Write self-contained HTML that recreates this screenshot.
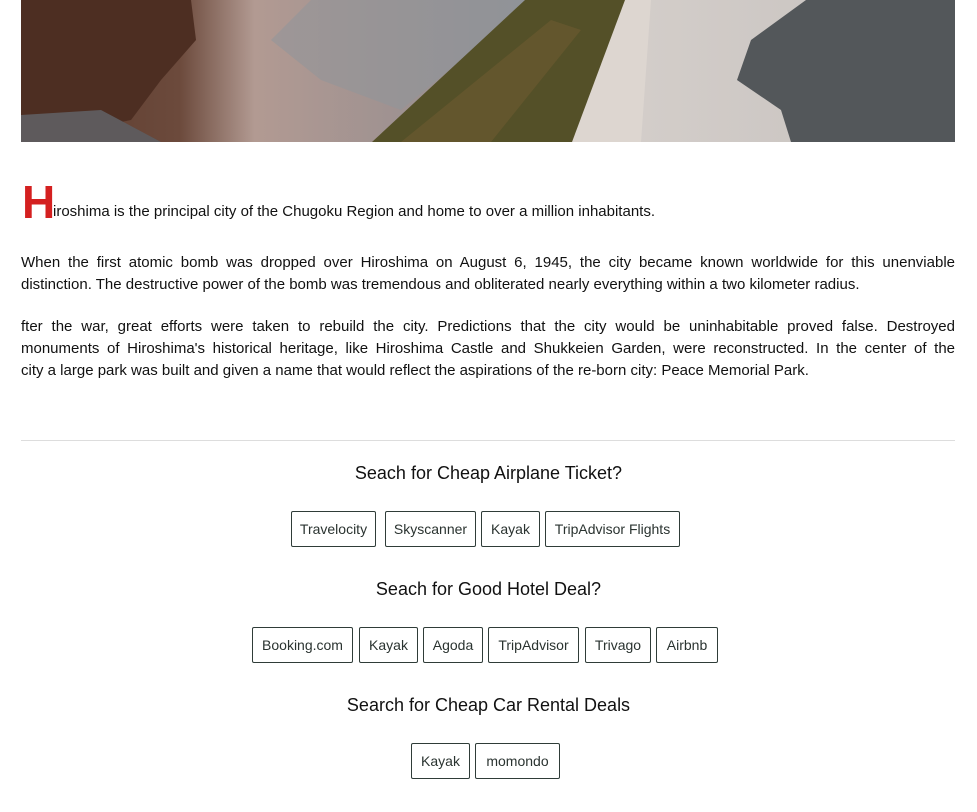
<!DOCTYPE html>
<html><head><meta charset="utf-8"><style>
html,body{margin:0;padding:0;background:#fff;}
body{width:977px;height:812px;overflow:hidden;font-family:"Liberation Sans",sans-serif;color:#111;position:relative;}
.photo{position:absolute;left:21px;top:0;width:934px;height:142px;}
.l{position:absolute;left:21px;width:934px;font-size:15px;line-height:22px;white-space:nowrap;}
.j{text-align:justify;text-align-last:justify;white-space:normal;}
.cap{position:absolute;left:22px;top:177px;color:#d42020;font-weight:bold;font-size:46px;line-height:50px;}
hr{position:absolute;left:21px;top:440px;width:934px;margin:0;border:0;border-top:1px solid #ddd;}
h3{position:absolute;left:0;width:977px;text-align:center;font-weight:normal;font-size:18px;margin:0;line-height:24px;}
.b{position:absolute;height:34px;border:1px solid #2f3c38;border-radius:2px;font-size:14px;line-height:34px;text-align:center;color:#2a3330;box-sizing:content-box;}
</style></head><body>
<svg class="photo" viewBox="0 0 934 142" preserveAspectRatio="none">
<defs>
<linearGradient id="w" x1="0" y1="0" x2="1" y2="0"><stop offset="0" stop-color="#5a3a2c"/><stop offset=".17" stop-color="#6c4a3c"/><stop offset=".25" stop-color="#b29a92"/><stop offset=".4" stop-color="#9f9291"/><stop offset=".6" stop-color="#8a8f95"/></linearGradient>
<linearGradient id="p" x1="0" y1="0" x2="1" y2="0"><stop offset="0" stop-color="#d6d0cc"/><stop offset="1" stop-color="#c6c1be"/></linearGradient>
</defs>
<rect width="934" height="142" fill="url(#w)"/>
<polygon points="0,0 170,0 175,40 140,80 110,120 60,130 0,125" fill="#4d2e22"/>
<polygon points="0,115 80,110 140,142 0,142" fill="#5e5a5c"/>
<polygon points="290,0 504,0 440,60 380,110 300,80 250,40" fill="#8f959a" opacity=".55"/>
<rect x="550" y="0" width="384" height="142" fill="url(#p)"/>
<polygon points="604,0 630,0 620,142 551,142" fill="#ddd6d0"/>
<polygon points="351,142 504,0 604,0 551,142" fill="#545028"/>
<polygon points="380,142 530,20 560,30 470,142" fill="#6e5a30" opacity=".6"/>
<polygon points="785,0 934,0 934,142 770,142 760,110 716,80 730,40" fill="#53575a"/>
</svg>
<div class="cap">H</div>
<div class="l" style="top:201px;left:53px">iroshima is the principal city of the Chugoku Region and home to over a million inhabitants.</div>
<div class="l j" style="top:252px">When the first atomic bomb was dropped over Hiroshima on August 6, 1945, the city became known worldwide for this unenviable</div>
<div class="l" style="top:274px">distinction. The destructive power of the bomb was tremendous and obliterated nearly everything within a two kilometer radius.</div>
<div class="l j" style="top:316px">fter the war, great efforts were taken to rebuild the city. Predictions that the city would be uninhabitable proved false. Destroyed</div>
<div class="l j" style="top:338px">monuments of Hiroshima's historical heritage, like Hiroshima Castle and Shukkeien Garden, were reconstructed. In the center of the</div>
<div class="l" style="top:360px">city a large park was built and given a name that would reflect the aspirations of the re-born city: Peace Memorial Park.</div>
<hr>
<h3 style="top:461px">Seach for Cheap Airplane Ticket?</h3>
<div class="b" style="top:511px;left:291px;width:83px">Travelocity</div>
<div class="b" style="top:511px;left:385px;width:89px">Skyscanner</div>
<div class="b" style="top:511px;left:481px;width:57px">Kayak</div>
<div class="b" style="top:511px;left:545px;width:133px">TripAdvisor Flights</div>
<h3 style="top:577px">Seach for Good Hotel Deal?</h3>
<div class="b" style="top:627px;left:252px;width:99px">Booking.com</div>
<div class="b" style="top:627px;left:359px;width:57px">Kayak</div>
<div class="b" style="top:627px;left:423px;width:58px">Agoda</div>
<div class="b" style="top:627px;left:488px;width:89px">TripAdvisor</div>
<div class="b" style="top:627px;left:585px;width:64px">Trivago</div>
<div class="b" style="top:627px;left:656px;width:60px">Airbnb</div>
<h3 style="top:693px">Search for Cheap Car Rental Deals</h3>
<div class="b" style="top:743px;left:411px;width:57px">Kayak</div>
<div class="b" style="top:743px;left:475px;width:83px">momondo</div>
</body></html>
